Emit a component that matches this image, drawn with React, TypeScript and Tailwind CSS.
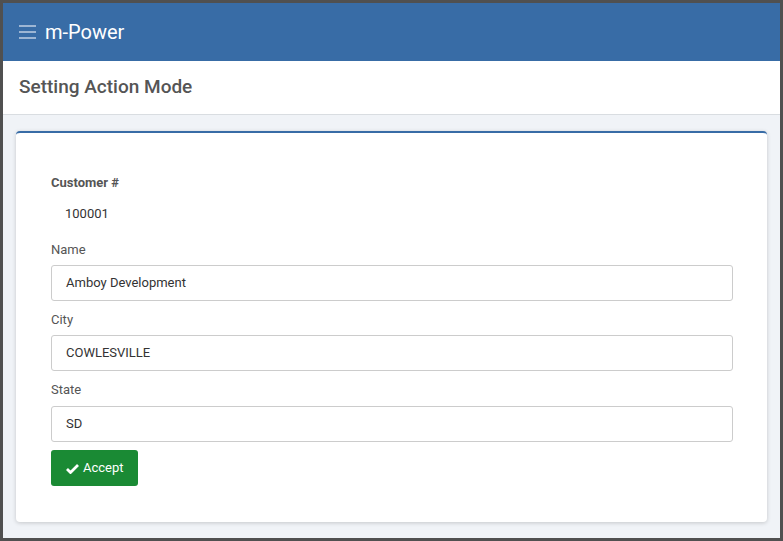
import React from "react";

function Field({ label, value, top, gap }: { label: string; value: string; top: string; gap: string }) {
  return (
    <div className={top}>
      <div className="h-5 leading-5 text-[13px] text-[#555]">{label}</div>
      <div className={`${gap} h-[36px] border border-[#ccc] rounded-[3px] flex items-center px-[14px] text-[13px] text-[#333]`}>
        {value}
      </div>
    </div>
  );
}

export default function App() {
  return (
    <div className="w-[783px] h-[541px] border-[3px] border-[#505050] bg-[#f0f3f7] flex flex-col" style={{ fontFamily: "Roboto, 'Liberation Sans', sans-serif" }}>
      <div className="h-[58px] bg-[#386ca6] flex items-center pl-[16px] shrink-0">
        <div className="flex flex-col gap-[4px] w-[17px]">
          <div className="h-[2px] bg-[#9db6d4]" />
          <div className="h-[2px] bg-[#9db6d4]" />
          <div className="h-[2px] bg-[#9db6d4]" />
        </div>
        <span className="ml-[9px] text-white text-[20px] leading-none">m-Power</span>
      </div>
      <div className="h-[54px] bg-white border-b border-[#d9dde1] flex items-center pl-[16px] shrink-0">
        <span className="text-[19px] font-medium text-[#555]">Setting Action Mode</span>
      </div>
      <div className="flex-1 px-[13px] pt-[16px]">
        <div className="bg-white rounded-[4px] border-t-[2px] border-[#386ca6] shadow-[0_1px_4px_rgba(0,0,0,0.18)] pl-[35px] pr-[34px] pt-[40px] pb-[36px]">
          <div className="h-5 leading-5 text-[13px] font-bold text-[#555]">Customer #</div>
          <div className="mt-[11px] h-5 leading-5 text-[13px] text-[#333] pl-[14px]">100001</div>
          <Field top="mt-[16px]" gap="mt-[5px]" label="Name" value="Amboy Development" />
          <Field top="mt-[9px]" gap="mt-[5px]" label="City" value="COWLESVILLE" />
          <Field top="mt-[9px]" gap="mt-[6px]" label="State" value="SD" />
          <button className="mt-[8px] h-[36px] pl-[15px] pr-[14px] bg-[#1a8a34] rounded-[3px] text-white text-[13px] flex items-center gap-[4px]">
            <svg width="13" height="11" viewBox="0 0 13 11">
              <path d="M1 6 L4.5 9.5 L12 2" stroke="white" strokeWidth="2.8" fill="none" strokeLinecap="butt" strokeLinejoin="miter" />
            </svg>
            Accept
          </button>
        </div>
      </div>
    </div>
  );
}
